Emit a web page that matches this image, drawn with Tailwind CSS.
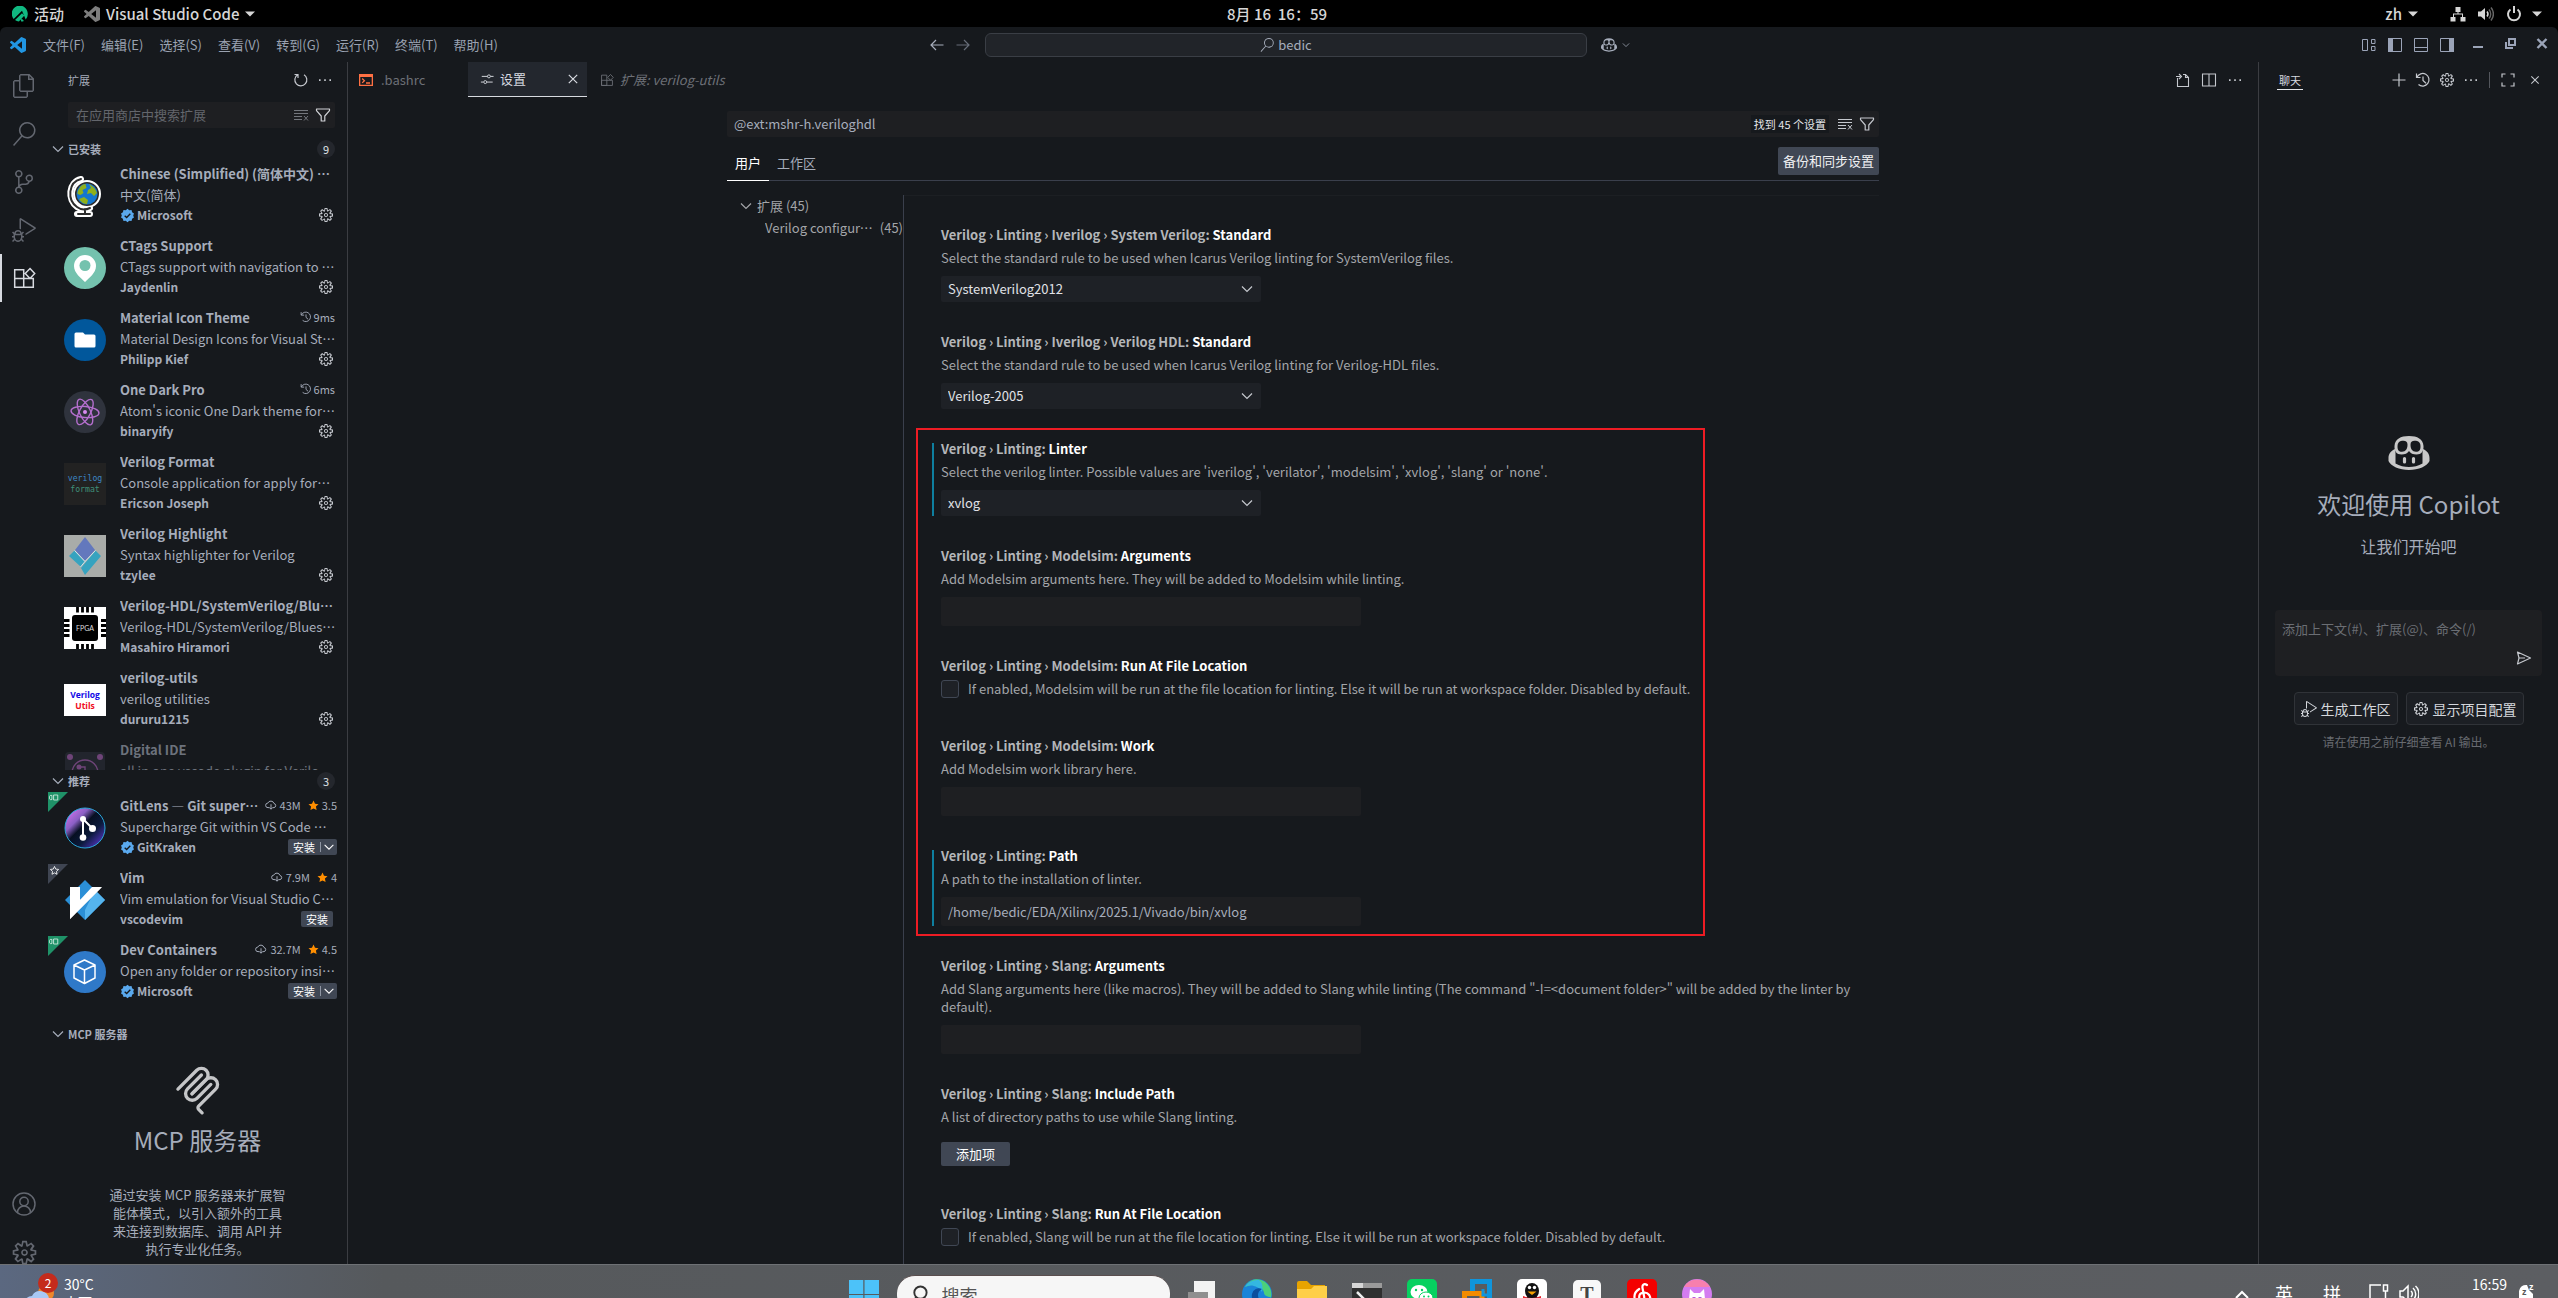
<!DOCTYPE html>
<html lang="zh-CN">

<head>
    <meta charset="UTF-8">
    <meta name="viewport" content="width=device-width, initial-scale=1.0">
    <title>设置 - bedic - Visual Studio Code</title>
    <script src="https://cdn.jsdelivr.net/npm/@tailwindcss/browser@4"></script>
</head>

<body class="bg-black font-['Noto_Sans_CJK_SC',sans-serif] text-[13px] leading-[18px] text-[#a6adbb]">
    <!-- Icon sprite -->
    <svg class="hidden">
        <symbol id="i-gear" viewBox="0 0 16 16"><path fill="currentColor" fill-rule="evenodd" d="M9.1 4.4L8.6 2H7.4l-.5 2.4-.7.3-2-1.3-.9.8 1.3 2-.2.7-2.4.5v1.2l2.4.5.3.8-1.3 2 .8.8 2-1.3.8.3.4 2.3h1.2l.5-2.4.8-.3 2 1.3.8-.8-1.3-2 .3-.8 2.3-.4V7.4l-2.4-.5-.3-.8 1.3-2-.8-.8-2 1.3-.7-.2zM9.4 1l.5 2.4L12 2.1l2 2-1.4 2.1 2.4.4v2.8l-2.4.5L14 12l-2 2-2.1-1.4-.5 2.4H6.6l-.5-2.4L4 13.9l-2-2 1.4-2.1L1 9.4V6.6l2.4-.5L2.1 4l2-2 2.1 1.4.4-2.4h2.8zm.6 7c0 1.1-.9 2-2 2s-2-.9-2-2 .9-2 2-2 2 .9 2 2zM8 9c.6 0 1-.4 1-1s-.4-1-1-1-1 .4-1 1 .4 1 1 1z"/></symbol>
        <symbol id="i-chevron" viewBox="0 0 16 16"><path fill="none" stroke="currentColor" stroke-width="1.2" d="M3 5.5l5 5 5-5"/></symbol>
        <symbol id="i-more" viewBox="0 0 16 16"><path fill="currentColor" d="M2 7.3h1.6v1.6H2zM7.2 7.3h1.6v1.6H7.2zM12.4 7.3H14v1.6h-1.6z"/></symbol>
        <symbol id="i-close" viewBox="0 0 16 16"><path fill="none" stroke="currentColor" stroke-width="1.2" d="M3.8 3.8l8.4 8.4M12.2 3.8l-8.4 8.4"/></symbol>
        <symbol id="i-search" viewBox="0 0 24 24"><path fill="currentColor" d="M15.25 0a8.25 8.25 0 0 0-6.18 13.72L1 22.88l1.12 1 8.05-9.12A8.251 8.251 0 1 0 15.25.01V0zm0 15a6.75 6.75 0 1 1 0-13.5 6.75 6.75 0 0 1 0 13.5z"/></symbol>
        <symbol id="i-debug" viewBox="0 0 24 24"><path fill="currentColor" d="M10.94 13.5l-1.32 1.32a3.73 3.73 0 0 0-7.24 0L1.06 13.5 0 14.56l1.72 1.72-.22.22V18H0v1.5h1.5v.08c.077.489.214.966.41 1.42L0 22.94 1.06 24l1.65-1.65A4.308 4.308 0 0 0 6 24a4.31 4.31 0 0 0 3.29-1.65L10.94 24 12 22.94 10.09 21c.198-.464.336-.951.41-1.45v-.1H12V18h-1.5v-1.5l-.22-.22L12 14.56l-1.06-1.06zM6 13.5a2.25 2.25 0 0 1 2.25 2.25h-4.5A2.25 2.25 0 0 1 6 13.5zm3 6a3.33 3.33 0 0 1-3 3 3.33 3.33 0 0 1-3-3v-2.25h6v2.25zm14.76-9.9v1.26L13.5 17.37V15.6l8.5-5.37L9 2v9.46a5.07 5.07 0 0 0-1.5-.72V.63L8.64 0l15.12 9.6z"/></symbol>
        <symbol id="i-extensions" viewBox="0 0 24 24"><path fill="none" stroke="currentColor" stroke-width="1.5" d="M2.7 3.7h9v17.6h-9zM2.7 12.5h18.6v8.8h-18.6zM18 2.5l4.7 5-4.7 5-4.8-5z"/></symbol>
        <symbol id="i-clear" viewBox="0 0 16 16"><path fill="none" stroke="currentColor" d="M1 3.5h14M1 6.5h14M1 9.5h8M1 12.5h8M11 9l4 4.5M15 9l-4 4.5"/></symbol>
        <symbol id="i-filter" viewBox="0 0 16 16"><path fill="none" stroke="currentColor" stroke-width="1.2" stroke-linejoin="round" d="M1.5 2h13v1.6L9.800 9v5H6.200V9L1.500 3.600z"/></symbol>
        <symbol id="i-history" viewBox="0 0 16 16"><path fill="none" stroke="currentColor" stroke-width="1.2" d="M1.5 1.5v4h4M1.9 5.3A6.3 6.3 0 1 1 3.5 12.5M8 4.5v4l3 2.7"/></symbol>
        <symbol id="i-verified" viewBox="0 0 16 16"><path fill="#5aa9ee" d="M8 .8l1.9 1.5 2.4-.2.6 2.4 2 1.3-.8 2.2.8 2.2-2 1.3-.6 2.4-2.4-.2L8 15.2l-1.9-1.5-2.4.2-.6-2.4-2-1.3L1.9 8l-.8-2.2 2-1.3.6-2.4 2.4.2z"/><path fill="none" stroke="#16191d" stroke-width="1.4" d="M5 8.2l2.1 2 3.9-4.1"/></symbol>
        <symbol id="i-cloud" viewBox="0 0 16 16"><path fill="none" stroke="currentColor" stroke-width="1.3" d="M6 11.5H4a3 3 0 0 1-.3-6A4.4 4.4 0 0 1 12 6a2.8 2.8 0 0 1 0 5.5h-2M8 7v6.5M6 11.6l2 2 2-2"/></symbol>
        <symbol id="i-star" viewBox="0 0 16 16"><path d="M8 .8l2.2 4.7 5.1.6-3.8 3.5 1 5.1L8 12.2l-4.5 2.5 1-5.1L.7 6.1l5.100-.6z"/></symbol>
        <symbol id="i-vscode" viewBox="0 0 24 24"><path fill="currentColor" d="M23.15 2.587L18.21.21a1.494 1.494 0 0 0-1.705.29l-9.46 8.63-4.12-3.128a.999.999 0 0 0-1.276.057L.327 7.261A1 1 0 0 0 .326 8.74L3.899 12 .326 15.26a1 1 0 0 0 .001 1.479L1.65 17.94a.999.999 0 0 0 1.276.057l4.12-3.128 9.46 8.63a1.492 1.492 0 0 0 1.704.29l4.942-2.377A1.5 1.5 0 0 0 24 20.06V3.939a1.5 1.5 0 0 0-.85-1.352zm-5.146 14.861L10.826 12l7.178-5.448v10.896z"/></symbol>
        <symbol id="i-copilot" viewBox="0 0 41 34"><path fill="currentColor" fill-rule="evenodd" d="M6 10C6.500 3 12 0 20.500 0S34.500 3 35 10c.3 5-2 8.500-7 8.500-3.500 0-6-1-7.500-3.500-1.500 2.500-4 3.500-7.500 3.500-5 0-7.300-3.500-7-8.500zM9 10.500c0 3.500 1.200 5.300 4.500 5.300 3.800 0 5.500-3 5.500-7 0-3-1.500-4-4-4-4 0-6 1.700-6 5.700zM32 10.500c0 3.500-1.200 5.300-4.500 5.300-3.800 0-5.500-3-5.500-7 0-3 1.500-4 4-4 4 0 6 1.700 6 5.700z"/><path fill="currentColor" d="M6.500 13C2 15 0 18 0 22v3c2 5 11 9 20.500 9S39 30 41 25v-3c0-4-2-7-6.500-9l-.5 4v10.500C30 30 25 31 20.500 31S11 30 7 27.500V17z"/><path fill="none" stroke="currentColor" stroke-width="3.200" stroke-linecap="round" d="M16 22.500v3.500M25 22.500v3.500"/></symbol>
        <symbol id="i-caret" viewBox="0 0 10 6"><path fill="currentColor" d="M0 .5h10L5 5.5z"/></symbol>
        <symbol id="i-remote" viewBox="0 0 12 8"><path fill="none" stroke="#d8efe6" stroke-width="1" d="M5.5 1h5v6h-5zM3.5 1.500h-2l-1 1v3l1 1h2z"/></symbol>
    </svg>

    <div class="flex h-screen flex-col overflow-hidden">
        <!-- Desktop top bar -->
        <header class="flex h-[27px] shrink-0 items-center bg-black px-3 text-[15px] font-medium text-[#d6d6d6]">
            <div class="flex flex-1 items-center">
                <svg class="size-4" viewBox="0 0 16 16"><path fill="#10b981" d="M13.7 13.5A8 8 0 0 0 15.7 7 8 8 0 1 0 1.7 12.9L10 4.7z"/><path fill="#10b981" d="M3 14l7-6.8 2.4 2.4-5.5 5.8A8 8 0 0 1 3 14zM12 14.9L9.8 12.7 8.6 14 9.6 15.8z"/></svg>
                <button class="ml-[6px]">活动</button>
                <svg class="ml-5 size-4 text-[#7d7d7d]"><use href="#i-vscode"/></svg>
                <button class="ml-[6px] flex items-center gap-[6px]">Visual Studio Code<svg class="h-[6px] w-[10px]"><use href="#i-caret"/></svg></button>
            </div>
            <time class="font-['Noto_Sans_CJK_JP',sans-serif] whitespace-pre">8月 16  16：59</time>
            <div class="flex flex-1 items-center justify-end pr-1">
                <button class="mr-8 flex items-center gap-[6px]">zh<svg class="h-[6px] w-[10px]"><use href="#i-caret"/></svg></button>
                <svg class="mr-3 size-4" viewBox="0 0 16 16"><path fill="currentColor" d="M5.5 1h5v5h-2v1.5H13V11h2.5v4.5h-5V11H12V8.500H4V11h1.5v4.5h-5V11H3V7.500h4.500V6h-2z"/></svg>
                <svg class="mr-3 size-4" viewBox="0 0 16 16"><path fill="currentColor" d="M0 5.5h3L7 2v12l-4-3.500H0z"/><path fill="none" stroke="currentColor" stroke-width="1.5" d="M9 5.5a4 4 0 0 1 0 5"/><path fill="none" stroke="#666" stroke-width="1.5" d="M11 3.5a7 7 0 0 1 0 9M13 1.5a10 10 0 0 1 0 13"/></svg>
                <svg class="mr-[10px] size-4" viewBox="0 0 16 16"><path fill="none" stroke="currentColor" stroke-width="2" d="M4.5 3.5a6 6 0 1 0 7 0M8 0v7"/></svg>
                <svg class="h-[6px] w-[10px]"><use href="#i-caret"/></svg>
            </div>
        </header>

        <!-- Editor window -->
        <div class="flex min-h-0 flex-1 flex-col overflow-hidden rounded-t-[6px] bg-[#16191d]">
            <div class="flex h-[35px] shrink-0 items-center">
                <div class="flex flex-1 items-center pl-[10px]">
                    <svg class="mr-[9px] size-4 text-[#2196e3]"><use href="#i-vscode"/></svg>
                    <nav class="flex text-[#9aa2b1]">
                        <button class="px-2">文件(F)</button>
                        <button class="px-2">编辑(E)</button>
                        <button class="px-2">选择(S)</button>
                        <button class="px-2">查看(V)</button>
                        <button class="px-2">转到(G)</button>
                        <button class="px-2">运行(R)</button>
                        <button class="px-2">终端(T)</button>
                        <button class="px-2">帮助(H)</button>
                    </nav>
                </div>
                <div class="flex items-center">
                    <button aria-label="后退"><svg class="size-4" viewBox="0 0 16 16"><path fill="none" stroke="currentColor" stroke-width="1.2" d="M14.5 8H2M7 3L2 8l5 5"/></svg></button>
                    <button aria-label="前进" class="ml-[10px]"><svg class="size-4 text-[#666c78]" viewBox="0 0 16 16"><path fill="none" stroke="currentColor" stroke-width="1.2" d="M1.5 8H14M9 3l5 5-5 5"/></svg></button>
                    <button class="mx-[14px] flex h-6 w-[602px] items-center justify-center gap-1 rounded-md border border-[#3a3e45] bg-[#212429]"><svg class="size-[14px]"><use href="#i-search"/></svg>bedic</button>
                    <button aria-label="Copilot" class="flex items-center gap-1"><svg class="size-4"><use href="#i-copilot"/></svg><svg class="size-[10px]"><use href="#i-chevron"/></svg></button>
                </div>
                <div class="flex flex-1 items-center justify-end gap-[10px] pr-2 text-[#9ba4b8]">
                    <svg class="size-4" viewBox="0 0 16 16"><path fill="none" stroke="currentColor" d="M1.5 2.5h5v11h-5zM10.5 2.5h3.500v4h-3.500zM10.5 9.5h3.500v4h-3.500z"/></svg>
                    <svg class="size-4" viewBox="0 0 16 16"><path fill="none" stroke="currentColor" d="M1.5 1.5h13v13h-13z"/><path fill="currentColor" d="M1 1h5v14H1z"/></svg>
                    <svg class="size-4" viewBox="0 0 16 16"><path fill="none" stroke="currentColor" d="M1.5 1.5h13v13h-13zM1.5 10.5h13"/></svg>
                    <svg class="mr-[5px] size-4" viewBox="0 0 16 16"><path fill="none" stroke="currentColor" d="M1.5 1.5h13v13h-13z"/><path fill="currentColor" d="M10 1h5v14h-5z"/></svg>
                    <button aria-label="最小化" class="mr-[6px]"><svg class="size-4" viewBox="0 0 16 16"><path fill="currentColor" d="M3 9h10v2H3z"/></svg></button>
                    <button aria-label="还原" class="mr-[6px]"><svg class="size-4" viewBox="0 0 16 16"><path fill="none" stroke="currentColor" stroke-width="2" d="M7 2h6v6H7zM4 5v6h7"/></svg></button>
                    <button aria-label="关闭"><svg class="size-4" viewBox="0 0 16 16"><path fill="none" stroke="currentColor" stroke-width="2.4" d="M3.5 2l9 9M12.5 2l-9 9"/></svg></button>
                </div>
            </div>

            <div class="flex min-h-0 flex-1">
                <!-- Activity bar -->
                <nav class="flex w-12 shrink-0 flex-col justify-between text-[#636770]">
                    <div>
                        <button aria-label="资源管理器" class="flex size-12 items-center justify-center"><svg class="size-6" viewBox="0 0 24 24"><path fill="currentColor" d="M17.5 0h-9L7 1.5V6H2.5L1 7.5v15.07L2.5 24h12.07L16 22.57V18h4.7l1.3-1.43V4.5L17.5 0zm0 2.12l2.38 2.38H17.5V2.12zm-3 20.38h-12v-15H7v9.07L8.5 18h6v4.5zm6-6h-12v-15H16V6h4.5v10.5z"/></svg></button>
                        <button aria-label="搜索" class="flex size-12 items-center justify-center"><svg class="size-6"><use href="#i-search"/></svg></button>
                        <button aria-label="源代码管理" class="flex size-12 items-center justify-center"><svg class="size-6" viewBox="0 0 24 24"><path fill="currentColor" d="M21.007 8.222A3.738 3.738 0 0 0 15.045 5.2a3.737 3.737 0 0 0 1.156 6.583 2.988 2.988 0 0 1-2.668 1.67h-2.99a4.456 4.456 0 0 0-2.989 1.165V7.4a3.737 3.737 0 1 0-1.494 0v9.117a3.776 3.776 0 1 0 1.816.099 2.99 2.99 0 0 1 2.668-1.667h2.99a4.484 4.484 0 0 0 4.223-3.039 3.736 3.736 0 0 0 3.25-3.687zM4.565 3.738a2.242 2.242 0 1 1 4.484 0 2.242 2.242 0 0 1-4.484 0zm4.484 16.441a2.242 2.242 0 1 1-4.484 0 2.242 2.242 0 0 1 4.484 0zm8.221-9.715a2.242 2.242 0 1 1 0-4.485 2.242 2.242 0 0 1 0 4.485z"/></svg></button>
                        <button aria-label="运行和调试" class="flex size-12 items-center justify-center"><svg class="size-6"><use href="#i-debug"/></svg></button>
                        <button aria-label="扩展" class="flex size-12 items-center justify-center border-l-2 border-[#d7dae0] pr-[2px] text-[#d7dae0]"><svg class="size-6"><use href="#i-extensions"/></svg></button>
                    </div>
                    <div class="-mb-3">
                        <button aria-label="帐户" class="flex size-12 items-center justify-center"><svg class="size-6" viewBox="0 0 24 24"><g fill="none" stroke="currentColor" stroke-width="1.5"><circle cx="12" cy="12" r="11"/><circle cx="12" cy="9.5" r="4.2"/><path d="M5.5 20.5a6.5 6.5 0 0 1 13 0"/></g></svg></button>
                        <button aria-label="管理" class="flex size-12 items-center justify-center"><svg class="size-[27px]"><use href="#i-gear"/></svg></button>
                    </div>
                </nav>

                <!-- Extensions side bar -->
                <aside class="flex w-[300px] shrink-0 flex-col overflow-hidden border-r border-[#3b3d42]">
                    <div class="flex h-[35px] shrink-0 items-center gap-2 pr-[14px] pl-5 text-[#c5c8ce]">
                        <h2 class="flex-1 text-[11px] text-[#a6adbb]">扩展</h2>
                        <button aria-label="刷新"><svg class="size-4" viewBox="0 0 16 16"><path fill="none" stroke="currentColor" stroke-width="1.2" d="M4.5 2.8A6 6 0 1 0 11 2.7M1.5 2.5h3.500V6"/></svg></button>
                        <button aria-label="更多"><svg class="size-4"><use href="#i-more"/></svg></button>
                    </div>
                    <div class="mt-[5px] mr-3 mb-[10px] ml-5 flex h-[26px] shrink-0 items-center gap-[6px] rounded-xs bg-[#1e1f22] px-1">
                        <input type="text" aria-label="搜索扩展" placeholder="在应用商店中搜索扩展" class="min-w-0 flex-1 px-1 outline-none placeholder:text-[#63666c]">
                        <svg class="size-4 text-[#74777d]"><use href="#i-clear"/></svg>
                        <svg class="size-4 text-[#d0d2d6]"><use href="#i-filter"/></svg>
                    </div>
                    <section>
                        <h3 class="flex h-[22px] items-center pr-3 pl-[2px] text-[11px] font-bold"><svg class="mr-[2px] size-4"><use href="#i-chevron"/></svg><span class="flex-1">已安装</span><span class="flex size-[18px] items-center justify-center rounded-full bg-[#24272d] font-normal text-[#dfe1e5]">9</span></h3>
                        <ul id="installed-list" class="h-[610px] overflow-hidden"></ul>
                    </section>
                    <section>
                        <h3 class="flex h-[22px] items-center pr-3 pl-[2px] text-[11px] font-bold"><svg class="mr-[2px] size-4"><use href="#i-chevron"/></svg><span class="flex-1">推荐</span><span class="flex size-[18px] items-center justify-center rounded-full bg-[#24272d] font-normal text-[#dfe1e5]">3</span></h3>
                        <ul id="recommended-list" class="mb-[15px]"></ul>
                    </section>
                    <section>
                        <h3 class="flex h-[22px] items-center pr-3 pl-[2px] text-[11px] font-bold"><svg class="mr-[2px] size-4"><use href="#i-chevron"/></svg>MCP 服务器</h3>
                        <div class="mt-[17px] flex flex-col items-center px-[60px] text-center">
                            <svg class="size-[54px]" viewBox="0 0 195 195"><g fill="none" stroke="#c5c6c8" stroke-width="12" stroke-linecap="round"><path d="M25 97.853L92.882 29.971C102.255 20.598 117.451 20.598 126.823 29.971C136.196 39.343 136.196 54.539 126.823 63.912L75.558 115.177"/><path d="M76.265 114.47L126.823 63.912C136.196 54.539 151.392 54.539 160.765 63.912L161.118 64.265C170.491 73.638 170.491 88.834 161.118 98.206L99.725 159.6C96.601 162.724 96.601 167.789 99.725 170.913L112.331 183.52"/><path d="M109.853 46.941L59.648 97.146C50.276 106.518 50.276 121.714 59.648 131.087C69.021 140.459 84.217 140.459 93.589 131.087L143.794 80.882"/></g></svg>
                            <h4 class="mt-2 text-2xl">MCP 服务器</h4>
                            <p class="mt-[30px]">通过安装 MCP 服务器来扩展智能体模式，以引入额外的工具来连接到数据库、调用 API 并执行专业化任务。</p>
                        </div>
                    </section>
                </aside>

                <!-- Editor group -->
                <main class="flex min-w-0 flex-1 flex-col">
                    <div class="flex h-[35px] shrink-0 text-[#6d7077]">
                        <a href="#" class="flex w-[120px] items-center gap-2 pl-[11px]"><svg class="size-[14px]" viewBox="0 0 14 14"><path fill="#ff7043" fill-rule="evenodd" d="M0 1h14v12H0zM1.3 4v7.700h11.400V4z"/><path fill="none" stroke="#ff7043" stroke-width="1.3" d="M3.2 5.5l2.200 2.200-2.200 2.200M7 10h4"/></svg>.bashrc</a>
                        <a href="#" class="flex w-[119px] items-center border-b border-[#d7dae0] bg-[#23272e] pr-[6px] pl-3 text-[#d7dae0]"><svg class="mr-[6px] size-[14px]" viewBox="0 0 16 16"><path fill="none" stroke="currentColor" stroke-width="1.1" d="M2 5h6.500M12 5h3.500M1 11.500h3M8 11.500h6.500"/><circle cx="10.2" cy="5" r="1.7" fill="none" stroke="currentColor"/><circle cx="6" cy="11.5" r="1.7" fill="none" stroke="currentColor"/></svg><span class="flex-1">设置</span><svg class="size-4"><use href="#i-close"/></svg></a>
                        <a href="#" class="flex items-center gap-[6px] pl-[13px] italic"><svg class="size-[14px]"><use href="#i-extensions"/></svg>扩展: verilog-utils</a>
                        <div class="flex flex-1 items-center justify-end gap-[10px] pr-[15px] text-[#c5c8ce]">
                            <svg class="size-4" viewBox="0 0 16 16"><path fill="none" stroke="currentColor" stroke-width="1.1" d="M2.5 6v8.500h11V5.500l-3-3H8M10.5 2.500v3h3M1 4.500h4.500M4 2l2.500 2.500L4 7"/></svg>
                            <svg class="size-4" viewBox="0 0 16 16"><path fill="none" stroke="currentColor" stroke-width="1.1" d="M1.5 2h13v12h-13zM8 2v12"/></svg>
                            <svg class="size-4"><use href="#i-more"/></svg>
                        </div>
                    </div>

                    <div class="mx-auto flex min-h-0 w-full max-w-[1200px] flex-1 flex-col px-6 pt-[14px]">
                        <div class="flex h-[26px] shrink-0 items-center rounded-xs bg-[#1e1f22] pr-1">
                            <input type="text" aria-label="搜索设置" value="@ext:mshr-h.veriloghdl" class="flex-1 px-[7px] outline-none">
                            <span class="mr-2 bg-[#16191d] px-[3px] text-[11px] text-[#e4e6ea]">找到 45 个设置</span>
                            <svg class="mr-[6px] size-4 text-[#c5c8ce]"><use href="#i-clear"/></svg>
                            <svg class="size-4 text-[#c5c8ce]"><use href="#i-filter"/></svg>
                        </div>
                        <div class="mt-[10px] flex h-[34px] shrink-0 border-b border-[#3a3f4c]">
                            <button class="-mb-px border-b border-white px-2 pb-[2px] text-white">用户</button>
                            <button class="px-2 pb-[2px]">工作区</button>
                            <button class="ml-auto h-7 rounded-xs bg-[#404754] px-[5px] text-[#f0f1f3]">备份和同步设置</button>
                        </div>
                        <div class="mt-[14px] flex min-h-0 flex-1">
                            <nav class="w-[177px] shrink-0 border-r border-[#3a3f4c] text-[#a3a5a9]">
                                <div class="flex h-[22px] items-center gap-[3px] pl-[11px]"><svg class="size-4"><use href="#i-chevron"/></svg>扩展 (45)</div>
                                <a href="#" class="flex h-[22px] items-center gap-[6px] pl-[38px]"><span class="truncate">Verilog configuration</span><span>(45)</span></a>
                            </nav>
                            <div class="min-w-0 flex-1 overflow-hidden border-t border-[#1c1f23] pt-[18px] pl-[37px]">
                                <div id="settings-top"></div>
                                <div class="relative">
                                    <div id="settings-marked"></div>
                                    <div class="pointer-events-none absolute top-0 bottom-[9px] -left-[25px] w-[789px] border-2 border-[#ed1c24]"></div>
                                </div>
                                <div id="settings-rest"></div>
                            </div>
                        </div>
                    </div>
                </main>

                <!-- Chat panel -->
                <aside class="flex w-[300px] shrink-0 flex-col border-l border-[#3b3d42]">
                    <div class="flex h-[35px] shrink-0 items-center pr-4 pl-[18px] text-[#c5c8ce]">
                        <h2 class="mt-[2px] border-b border-[#e4e6ea] px-[2px] text-[11px] text-[#d7dae0]">聊天</h2>
                        <div class="ml-auto flex items-center gap-2">
                            <svg class="size-4" viewBox="0 0 16 16"><path fill="none" stroke="currentColor" stroke-width="1.2" d="M8 1.5v13M1.5 8h13"/></svg>
                            <svg class="size-4"><use href="#i-history"/></svg>
                            <svg class="size-4"><use href="#i-gear"/></svg>
                            <svg class="size-4"><use href="#i-more"/></svg>
                            <span class="mx-[2px] h-4 w-px bg-[#53565c]"></span>
                            <svg class="mr-1 size-4" viewBox="0 0 16 16"><path fill="none" stroke="currentColor" stroke-width="1.2" d="M2 5.5V2h3.500M10.5 2H14v3.500M14 10.5V14h-3.500M5.5 14H2v-3.500"/></svg>
                            <svg class="size-[14px]"><use href="#i-close"/></svg>
                        </div>
                    </div>
                    <div class="flex flex-col items-center px-4 pt-[339px]">
                        <svg class="h-[34px] w-[42px] text-[#c8c8c8]"><use href="#i-copilot"/></svg>
                        <h3 class="mt-[18px] text-2xl">欢迎使用 Copilot</h3>
                        <p class="mt-[14px] text-base">让我们开始吧</p>
                        <div class="mt-[52px] flex h-[66px] w-full flex-col justify-between rounded-sm bg-[#1e1f22] py-[10px] pr-[10px] pl-[7px]">
                            <input type="text" aria-label="聊天输入" placeholder="添加上下文(#)、扩展(@)、命令(/)" class="w-full outline-none placeholder:text-[#6b6e74]">
                            <button aria-label="发送" class="self-end text-[#c5c8ce]"><svg class="size-4" viewBox="0 0 16 16"><path fill="none" stroke="currentColor" stroke-width="1.2" stroke-linejoin="round" d="M1.5 2l13 6-13 6 1.500-6zM3 8h6"/></svg></button>
                        </div>
                        <div class="mt-4 flex gap-2 text-sm text-[#d4d7dc]">
                            <button class="flex h-[33px] items-center gap-1 rounded-sm border border-[#303338] bg-[#1c1f24] px-[6px] whitespace-nowrap"><svg class="size-4"><use href="#i-debug"/></svg>生成工作区</button>
                            <button class="flex h-[33px] items-center gap-1 rounded-sm border border-[#303338] bg-[#1c1f24] px-[6px] whitespace-nowrap"><svg class="size-4"><use href="#i-gear"/></svg>显示项目配置</button>
                        </div>
                        <p class="mt-[9px] text-xs text-[#676a70]">请在使用之前仔细查看 AI 输出。</p>
                    </div>
                </aside>
            </div>
        </div>

        <!-- Host taskbar -->
        <footer class="flex h-[34px] shrink-0 items-start overflow-hidden border-t border-[#6e7175] bg-linear-to-r from-[#5b6880] via-[#56595c] via-15% to-[#5c5e62] text-white">
            <div class="flex flex-1 pt-[10px] pl-[22px]">
                <div class="relative h-10 w-[42px]">
                    <svg class="mt-2 h-8 w-8" viewBox="0 0 32 32"><circle cx="24" cy="10" r="8" fill="#f0872b"/><path fill="#a9c8f5" d="M2 20a8 8 0 0 1 8-7 9 9 0 0 1 17 3 7 7 0 0 1 1 14H4z"/></svg>
                    <span class="absolute -top-[2px] left-4 flex size-5 items-center justify-center rounded-full bg-[#c42b1c] text-xs">2</span>
                </div>
                <div class="text-sm leading-[18px]"><p>30°C</p><p>大雨</p></div>
            </div>
            <div class="flex items-start pt-[14px] pl-[3px]">
                <svg class="mr-[18px] size-[30px]" viewBox="0 0 30 30"><path fill="#4cc2f9" d="M0 1h14.300v14H0zM15.5 1H30v14H15.5zM0 16h14.300v14H0zM15.5 16H30v14H15.5z"/></svg>
                <label class="-mt-1 mr-[17px] flex h-[38px] w-[273px] items-center rounded-[18px] border-t border-[#5a4e4e] bg-[#f6f6f6] pl-[13px] text-[#555]"><svg class="mr-[13px] size-[19px]" viewBox="0 0 20 20"><g fill="none" stroke="#333" stroke-width="2"><circle cx="11" cy="8" r="6.5"/><path d="M6.5 13L1.5 18.5"/></g></svg><input type="text" aria-label="搜索" placeholder="搜索" class="w-40 text-lg outline-none placeholder:text-[#555]"></label>
                <div class="flex gap-[25px]">
                    <svg class="size-[30px]" viewBox="0 0 30 30"><path fill="#f3f3f3" d="M7 2h21v22H7z"/><path fill="#8f8f8f" d="M1 13h20v16H1z"/></svg>
                    <svg class="size-[30px]" viewBox="0 0 30 30"><circle cx="15" cy="15" r="15" fill="#1a84d8"/><path fill="#4cd07a" d="M12 .5a15 15 0 0 1 17 18c-4-1-7-2-7-5C20 6 12 4 3 8A15 15 0 0 1 12 .5z"/><path fill="#34b7e0" d="M3 7.5A15 15 0 0 1 17 1c4 3 4 8 3 12-3-6-11-8-17-5.500z"/><path fill="#0c4f9e" d="M10 15a7 7 0 0 1 10-5c-4 2-5 6-3 10l2 9C12 28 9 20 10 15z"/></svg>
                    <svg class="size-[30px]" viewBox="0 0 30 30"><path fill="#e8a400" d="M0 4q0-2 2-2h8l4 4h14v6H0z"/><path fill="#ffcf48" d="M0 10h14l3-3h13v21H0z"/></svg>
                    <svg class="size-[30px]" viewBox="0 0 30 30"><path fill="#2f2f2f" d="M0 4h30v26H0z"/><path fill="#9a9a9a" d="M0 4h30v5H0z"/><path fill="#d6d6d6" d="M0 4h11v5H0z"/><path fill="none" stroke="#eee" stroke-width="2.5" d="M5 13l6 6-6 6"/></svg>
                    <svg class="size-[30px]" viewBox="0 0 30 30"><rect width="30" height="32" rx="5" fill="#07d160"/><ellipse cx="12" cy="13" rx="8.5" ry="7" fill="#fff"/><ellipse cx="19" cy="19" rx="7" ry="6" fill="#fff" stroke="#07d160"/><g fill="#07d160"><circle cx="9" cy="11" r="1.2"/><circle cx="15" cy="11" r="1.2"/><circle cx="17" cy="17.5" r="1"/><circle cx="21.5" cy="17.5" r="1"/></g></svg>
                    <svg class="size-[30px]" viewBox="0 0 30 30"><g fill="none" stroke-width="5"><path stroke="#0f95dc" d="M10.5 12V2.500h17V22"/><path stroke="#f38b00" d="M2.5 28V14.500H20V28"/></g><path fill="none" stroke="#0f95dc" stroke-width="3" d="M21 10v6h7"/></svg>
                    <svg class="size-[30px]" viewBox="0 0 30 30"><rect width="30" height="32" rx="5" fill="#fff"/><ellipse cx="15" cy="12" rx="7" ry="8" fill="#111"/><ellipse cx="15" cy="24" rx="9" ry="7" fill="#111"/><path fill="#f6a300" d="M10.5 12.500h9l-4.500 3.500z"/><circle cx="12.5" cy="8.5" r="1.7" fill="#fff"/><circle cx="17.500" cy="8.5" r="1.7" fill="#fff"/><path fill="#e3202a" d="M6 17q9 4 18 0v4q-9 3-18 0z"/></svg>
                    <svg class="size-[30px]" viewBox="0 0 30 30"><rect x="1" y="1" width="28" height="32" rx="5" fill="#f8f8f8"/><text x="15" y="22" text-anchor="middle" font-family="Liberation Serif" font-weight="bold" font-size="20" fill="#444">T</text></svg>
                    <svg class="size-[30px]" viewBox="0 0 30 30"><rect width="30" height="32" rx="5" fill="#f40000"/><path fill="none" stroke="#fff" stroke-width="2.2" stroke-linecap="round" d="M20 6c-3-2-5 0-4.500 3l1.700 9c.5 4-5 4-5 0 0-5 7-6 10-2 3 5-1 10-7 10-8 0-11-11-3-16"/></svg>
                    <svg class="size-[30px]" viewBox="0 0 30 30"><circle cx="15" cy="15" r="15" fill="#d47cf0"/><path fill="#f77fae" d="M2 8a15 15 0 0 1 26 0z"/><path fill="#fff" d="M8 10l4 4h6l4-4 1 10a8 7 0 0 1-16 0z"/><path fill="#b55cdb" d="M10.5 18h3v1.500h-3zM16.5 18h3v1.500h-3z"/></svg>
                </div>
            </div>
            <div class="flex flex-1 items-start justify-end pt-[18px] pr-[23px] text-lg leading-6">
                <svg class="mt-[6px] mr-[26px] h-3 w-[14px]" viewBox="0 0 14 12"><path fill="none" stroke="currentColor" stroke-width="2" d="M1 9l6-6 6 6"/></svg>
                <span class="-mt-[2px] mr-[30px]">英</span>
                <span class="-mt-[2px] mr-[28px]">拼</span>
                <svg class="mt-[1px] mr-[10px] size-5" viewBox="0 0 20 20"><path fill="none" stroke="currentColor" stroke-width="1.5" d="M12 1H1v14h16M14.5 1h4v6h-4zM16.5 7v8"/></svg>
                <svg class="mr-[53px] size-5" viewBox="0 0 20 20"><path fill="none" stroke="currentColor" stroke-width="1.5" d="M1 8h3l5-5v16l-5-5H1zM12 8a4 4 0 0 1 0 6M14 5a8 8 0 0 1 0 12M16.5 3a11 11 0 0 1 0 16"/></svg>
                <time class="-mt-[10px] mr-3 text-sm leading-[22px]">16:59</time>
                <svg class="h-5 w-4" viewBox="0 0 16 20"><path fill="#fff" d="M0 18V8a7 7 0 0 1 8-6l2 5 4 4v7z"/><text x="3" y="12" font-family="Liberation Sans" font-weight="bold" font-size="9" fill="#555">z</text><text x="10" y="7" font-family="Liberation Sans" font-weight="bold" font-size="9" fill="#fff">z</text></svg>
            </div>
        </footer>
    </div>

    <script>
        const gear = '<button aria-label="管理" class="mr-[3px] text-[#c5c8ce]"><svg class="size-4"><use href="#i-gear"/></svg></button>';
        const verified = '<svg class="mr-[2px] size-[15px] shrink-0"><use href="#i-verified"/></svg>';

        const installed = [
            { name: 'Chinese (Simplified) (简体中文) Language Pack', desc: '中文(简体)', publisher: 'Microsoft', verified: true,
              icon: '<g fill="none" stroke-linecap="round"><path stroke="#fff" stroke-width="6" d="M17 4C4 7 3 25 13 32c4 3 9 3 13 1M22 33v5M13 39h13"/><circle cx="23" cy="19" r="13" fill="#2d2d2d" stroke="#fff" stroke-width="2"/><path stroke="#2d2d2d" stroke-width="2" d="M17 4C4 7 3 25 13 32c4 3 9 3 13 1M21 34v4M14 39h12"/></g><circle cx="23" cy="19" r="10.5" fill="#1476cf"/><path fill="#8fb01c" d="M13.500 17q3-8 8-8l1 4-4 2 1 3-3 2-3-1zM25 9q6 3 8 9l-3 3-3-3-4 1 1-4 3-2zM15 24l5-2 4 3-1 4q-5 0-8-5z"/>' },
            { name: 'CTags Support', desc: 'CTags support with navigation to definition', publisher: 'Jaydenlin',
              icon: '<circle cx="21" cy="21" r="21" fill="#74c2ae"/><path fill="#fff" d="M21 8a11 11 0 0 1 11 11c0 7-7 12-11 16-4-4-11-9-11-16A11 11 0 0 1 21 8z"/><circle cx="21" cy="18.5" r="5.5" fill="#74c2ae"/>' },
            { name: 'Material Icon Theme', desc: 'Material Design Icons for Visual Studio Code', publisher: 'Philipp Kief', time: '9ms',
              icon: '<circle cx="21" cy="21" r="21" fill="#01579b"/><path fill="#fff" d="M12 13.5h7l2 2h9q1.5 0 1.5 1.5v10q0 1.5-1.5 1.5H12q-1.5 0-1.5-1.5V15q0-1.5 1.5-1.5z"/>' },
            { name: 'One Dark Pro', desc: "Atom's iconic One Dark theme for Visual Studio", publisher: 'binaryify', time: '6ms',
              icon: '<circle cx="21" cy="21" r="21" fill="#2f333d"/><g fill="none" stroke="#b56fce" stroke-width="1.4"><ellipse cx="21" cy="21" rx="14" ry="5.5" transform="rotate(5 21 21)"/><ellipse cx="21" cy="21" rx="14" ry="5.5" transform="rotate(65 21 21)"/><ellipse cx="21" cy="21" rx="14" ry="5.5" transform="rotate(118 21 21)"/></g><circle cx="21" cy="21" r="2" fill="#d98af0"/>' },
            { name: 'Verilog Format', desc: 'Console application for apply format', publisher: 'Ericson Joseph',
              icon: '<path fill="#222" d="M0 0h42v42H0z"/><g font-family="DejaVu Sans Mono" font-size="8.2" text-anchor="middle"><text x="21" y="18" fill="#3d86c4">verilog</text><text x="21" y="29" fill="#3f8f78">format</text></g>' },
            { name: 'Verilog Highlight', desc: 'Syntax highlighter for Verilog', publisher: 'tzylee',
              icon: '<path fill="#a9aca9" d="M0 0h42v42H0z"/><path fill="#6378bd" d="M21 2l10 13-10 11-10-11z"/><path fill="#36a3bf" d="M10.5 15.5L21 27l-4 5L5 21zM31.5 15.5L37 21 21 40l-4-7z"/><path fill="none" stroke="#d5e6ea" d="M10.5 15.5L21 26.5l10.5-11M21 26.5L16.5 32"/>' },
            { name: 'Verilog-HDL/SystemVerilog/Bluespec', desc: 'Verilog-HDL/SystemVerilog/Bluespec', publisher: 'Masahiro Hiramori',
              icon: '<path fill="#fff" d="M0 0h42v42H0z"/><rect x="8" y="8" width="26" height="26" rx="3"/><path stroke="#000" stroke-width="2.8" d="M13.5 0v5.5M18.5 0v5.5M23.5 0v5.5M28.5 0v5.5M13.5 37v5M18.5 37v5M23.5 37v5M28.5 37v5M0 13.5h5.5M0 18.5h5.5M0 23.5h5.5M0 28.5h5.5M37 13.5h5M37 18.5h5M37 23.5h5M37 28.5h5"/><text x="21" y="24" fill="#ddd" font-family="Lato" font-size="7" text-anchor="middle">FPGA</text>' },
            { name: 'verilog-utils', desc: 'verilog utilities', publisher: 'dururu1215',
              icon: '<path fill="#fff" d="M0 5h42v32H0z"/><g font-family="Open Sans" font-weight="bold" font-size="8.5" text-anchor="middle"><text x="21" y="19" fill="#1208e6">Verilog</text><text x="21" y="30" fill="#f00c22">Utils</text></g>' },
            { name: 'Digital IDE', desc: 'all in one vscode plugin for Verilog/VHDL', publisher: 'sterben', dim: true,
              icon: '<rect x="1" y="1" width="40" height="40" rx="4" fill="#2b2e38"/><g fill="#a961b5"><circle cx="6" cy="6" r="3"/><circle cx="36" cy="6" r="3"/><circle cx="15" cy="16" r="2.5"/></g><path fill="none" stroke="#a961b5" stroke-width="1.4" d="M8 22a13 13 0 0 1 26 0M15 16h6v6"/>' }
        ];

        const recommended = [
            { name: 'GitLens — Git supercharged', desc: 'Supercharge Git within VS Code — visualize', publisher: 'GitKraken', verified: true, installs: '43M', rating: '3.5', remote: true,
              icon: '<defs><linearGradient id="gl" x1="0" y1="0" x2="1" y2="1"><stop offset="0" stop-color="#e879f9"/><stop offset=".3" stop-color="#8a5fc4"/><stop offset=".45" stop-color="#071022"/><stop offset=".65" stop-color="#0b1a3c"/><stop offset="1" stop-color="#6d3df0"/></linearGradient></defs><circle cx="21" cy="21" r="20" fill="url(#gl)" stroke="#2aa7d8"/><path fill="none" stroke="#fff" stroke-width="2" d="M19 12v18M19 12l9 9"/><g fill="#fff"><circle cx="19" cy="12" r="3"/><circle cx="28.5" cy="21.5" r="3.5"/><circle cx="19" cy="30.5" r="3.3"/></g>' },
            { name: 'Vim', desc: 'Vim emulation for Visual Studio Code', publisher: 'vscodevim', installs: '7.9M', rating: '4', single: true,
              icon: '<path fill="#2b8fd6" d="M21 1l20 20-20 20L1 21z"/><path fill="#55b4ee" d="M31 11l10 10-20 20 0-10z"/><path fill="#d4d8da" d="M6 8h8v14L38 8 6 40z"/><path fill="#fff" d="M6 8h10v13L28 8h10L12 34l-6 6z"/>' },
            { name: 'Dev Containers', desc: 'Open any folder or repository inside a container', publisher: 'Microsoft', verified: true, installs: '32.7M', rating: '4.5', remote: true,
              icon: '<circle cx="21" cy="21" r="21" fill="#2f79c8"/><path fill="none" stroke="#fff" stroke-width="1.5" stroke-linejoin="round" d="M20.5 9l10.5 5v13l-10.5 5.5L10 27V14zM10 14l10.5 5L31 14M20.5 19v13"/>' }
        ];

        function extItem(ext) {
            const stats = ext.time
                ? `<span class="mr-[2px] flex shrink-0 items-center gap-[2px] text-[11px]"><svg class="size-3"><use href="#i-history"/></svg>${ext.time}</span>`
                : ext.installs
                    ? `<span class="flex shrink-0 items-center gap-[3px] text-[11px]"><svg class="size-3"><use href="#i-cloud"/></svg>${ext.installs}<svg class="ml-1 size-[11px] fill-[#ff8e00]"><use href="#i-star"/></svg>${ext.rating}</span>`
                    : '';
            const install = ext.single
                ? '<button class="mr-1 h-4 rounded-xs bg-[#404754] px-[5px] text-[11px] leading-4 font-normal text-white">安装</button>'
                : '<button class="flex h-4 items-center rounded-xs bg-[#404754] pr-px pl-[5px] text-[11px] leading-4 font-normal text-white">安装<span class="ml-[5px] h-[10px] w-px bg-[#8f96a3]"></span><svg class="ml-px size-[14px]"><use href="#i-chevron"/></svg></button>';
            const bookmark = ext.installs
                ? `<svg class="absolute top-0 left-0 size-5" viewBox="0 0 20 20"><path fill="${ext.remote ? '#1f9268' : '#3f4552'}" d="M0 0h20L0 20z"/>${ext.remote
                    ? '<use href="#i-remote" x="1" y="2" width="10" height="7"/>'
                    : '<use href="#i-star" x="2" y="2" width="9" height="9" fill="none" stroke="#fff" stroke-width="1.5"/>'}</svg>`
                : '';
            return `
                <li class="relative flex h-[72px] items-center gap-[14px] overflow-hidden pr-[10px] pl-4">
                    ${bookmark}
                    <svg class="size-[42px] shrink-0 ${ext.dim ? 'opacity-60' : ''}" viewBox="0 0 42 42">${ext.icon}</svg>
                    <div class="min-w-0 flex-1 pb-1 leading-[21px] ${ext.dim ? 'opacity-60' : ''}">
                        <div class="flex items-center gap-1"><span class="min-w-0 flex-1 truncate font-bold">${ext.name}</span>${stats}</div>
                        <p class="truncate">${ext.desc}</p>
                        <div class="flex h-[21px] items-center text-xs font-bold">${ext.verified ? verified : ''}<span class="min-w-0 flex-1 truncate">${ext.publisher}</span>${ext.installs ? install : gear}</div>
                    </div>
                </li>`;
        }

        document.getElementById('installed-list').innerHTML = installed.map(extItem).join('');
        document.getElementById('recommended-list').innerHTML = recommended.map(extItem).join('');

        const settings = {
            'settings-top': [
                { path: 'Verilog › Linting › Iverilog › System Verilog:', label: 'Standard', desc: 'Select the standard rule to be used when Icarus Verilog linting for SystemVerilog files.', type: 'select', value: 'SystemVerilog2012' },
                { path: 'Verilog › Linting › Iverilog › Verilog HDL:', label: 'Standard', desc: 'Select the standard rule to be used when Icarus Verilog linting for Verilog-HDL files.', type: 'select', value: 'Verilog-2005' }
            ],
            'settings-marked': [
                { path: 'Verilog › Linting:', label: 'Linter', desc: "Select the verilog linter. Possible values are 'iverilog', 'verilator', 'modelsim', 'xvlog', 'slang' or 'none'.", type: 'select', value: 'xvlog', modified: true },
                { path: 'Verilog › Linting › Modelsim:', label: 'Arguments', desc: 'Add Modelsim arguments here. They will be added to Modelsim while linting.', type: 'text', value: '' },
                { path: 'Verilog › Linting › Modelsim:', label: 'Run At File Location', desc: 'If enabled, Modelsim will be run at the file location for linting. Else it will be run at workspace folder. Disabled by default.', type: 'checkbox' },
                { path: 'Verilog › Linting › Modelsim:', label: 'Work', desc: 'Add Modelsim work library here.', type: 'text', value: '' },
                { path: 'Verilog › Linting:', label: 'Path', desc: 'A path to the installation of linter.', type: 'text', value: '/home/bedic/EDA/Xilinx/2025.1/Vivado/bin/xvlog', modified: true }
            ],
            'settings-rest': [
                { path: 'Verilog › Linting › Slang:', label: 'Arguments', desc: 'Add Slang arguments here (like macros). They will be added to Slang while linting (The command "-I=&lt;document folder&gt;" will be added by the linter by default).', type: 'text', value: '' },
                { path: 'Verilog › Linting › Slang:', label: 'Include Path', desc: 'A list of directory paths to use while Slang linting.', type: 'list' },
                { path: 'Verilog › Linting › Slang:', label: 'Run At File Location', desc: 'If enabled, Slang will be run at the file location for linting. Else it will be run at workspace folder. Disabled by default.', type: 'checkbox' }
            ]
        };

        function settingItem(item, id) {
            const title = `<label for="${id}" class="mb-[5px] block font-bold text-[#b4b6b9]">${item.path} <span class="text-white">${item.label}</span></label>`;
            const desc = `<p class="text-[#a3a5a9]">${item.desc}</p>`;
            const bar = item.modified ? '<span class="absolute top-[15px] bottom-[19px] -left-[9px] w-[2px] bg-[#0e7f9f]"></span>' : '';
            let body = '';

            switch (item.type) {
                case 'select':
                    body = `${desc}
                        <div class="relative mt-[9px] h-[26px] w-80">
                            <select id="${id}" class="h-full w-full appearance-none rounded-xs bg-[#1e2126] px-[7px] text-[#e0e2e6]"><option>${item.value}</option></select>
                            <svg class="pointer-events-none absolute top-[5px] right-[6px] size-4 text-[#c5c8ce]"><use href="#i-chevron"/></svg>
                        </div>`;
                    break;
                case 'text':
                    body = `${desc}<input type="text" id="${id}" value="${item.value}" class="mt-[9px] block h-[29px] w-[420px] rounded-xs bg-[#1e1f22] px-[7px] outline-none">`;
                    break;
                case 'checkbox':
                    body = `<div class="mb-2 flex gap-[9px]"><input type="checkbox" id="${id}" class="size-[18px] shrink-0 appearance-none rounded-[3px] border border-[#404754] bg-[#1e2126]">${desc}</div>`;
                    break;
                case 'list':
                    body = `${desc}<button id="${id}" class="mt-4 mb-2 block h-6 rounded-xs bg-[#404754] px-[15px] text-white">添加项</button>`;
                    break;
            }
            return `<div class="relative pt-3 pb-[19px]">${bar}${title}${body}</div>`;
        }

        Object.entries(settings).forEach(([group, items]) => {
            document.getElementById(group).innerHTML = items.map((item, i) => settingItem(item, `${group}-${i}`)).join('');
        });
    </script>
</body>

</html>
